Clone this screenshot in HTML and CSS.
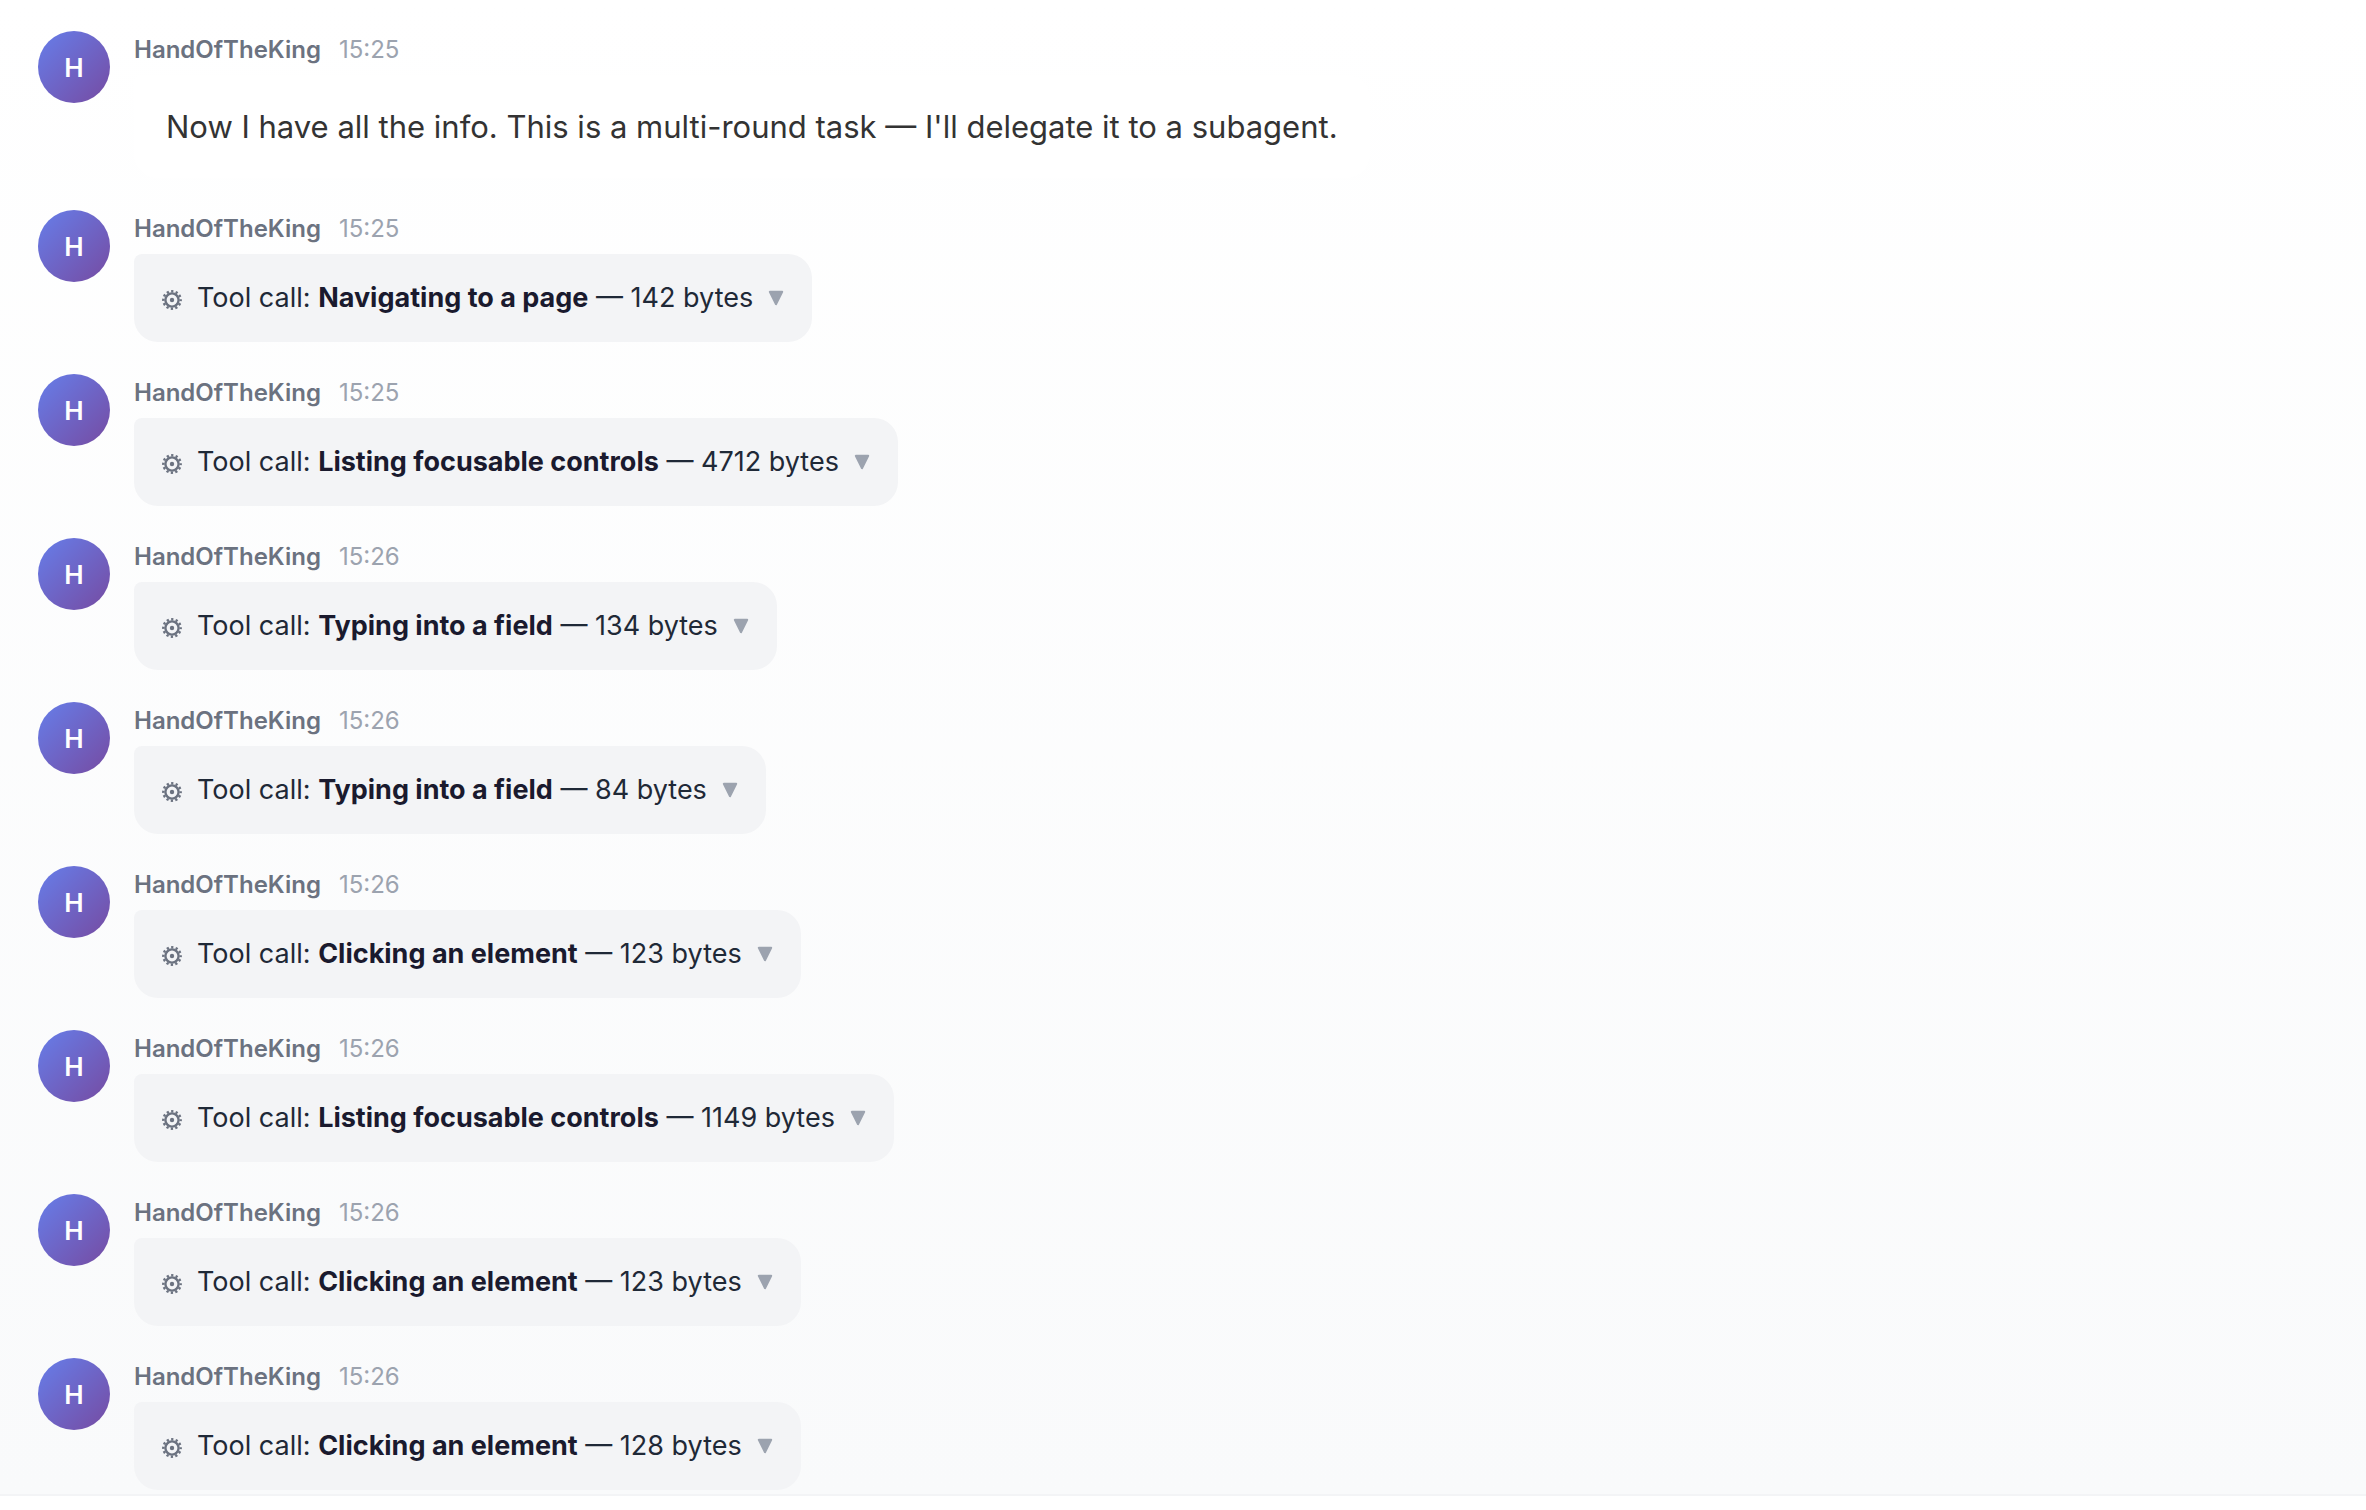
FILE: index.html
```
<!DOCTYPE html>
<html lang="en">
<head>
  <meta charset="UTF-8">
  <meta name="viewport" content="width=device-width, initial-scale=1.0">
  <title>Chat</title>
  <link rel="stylesheet" href="styles.css">
</head>
<body>
  <svg class="sprite" aria-hidden="true">
    <symbol id="gear" viewBox="0 0 20 20">
      <circle cx="10" cy="10" r="6.6" fill="none" stroke="currentColor" stroke-width="2.4"/>
      <circle cx="10" cy="10" r="8.7" fill="none" stroke="currentColor" stroke-width="2.4" stroke-dasharray="2.3 2.255" stroke-dashoffset="1.15"/>
      <circle cx="10" cy="10" r="2.2" fill="currentColor"/>
    </symbol>
    <symbol id="caret" viewBox="0 0 16 16">
      <path d="M1.8 1.8H14.2L8 14.2Z" fill="currentColor" stroke="currentColor" stroke-width="2" stroke-linejoin="round"/>
    </symbol>
  </svg>

  <main class="messages">
    <article class="message">
      <div class="avatar">H</div>
      <div class="content">
        <div class="meta"><span class="name">HandOfTheKing</span><time>15:25</time></div>
        <p class="bubble">Now I have all the info. This is a multi-round task — I'll delegate it to a subagent.</p>
      </div>
    </article>
    <article class="message">
      <div class="avatar">H</div>
      <div class="content">
        <div class="meta"><span class="name">HandOfTheKing</span><time>15:25</time></div>
        <button class="tool"><svg class="gear"><use href="#gear"/></svg><span>Tool call: <strong>Navigating to a page</strong> — 142 bytes</span><svg class="caret"><use href="#caret"/></svg></button>
      </div>
    </article>
    <article class="message">
      <div class="avatar">H</div>
      <div class="content">
        <div class="meta"><span class="name">HandOfTheKing</span><time>15:25</time></div>
        <button class="tool"><svg class="gear"><use href="#gear"/></svg><span>Tool call: <strong>Listing focusable controls</strong> — 4712 bytes</span><svg class="caret"><use href="#caret"/></svg></button>
      </div>
    </article>
    <article class="message">
      <div class="avatar">H</div>
      <div class="content">
        <div class="meta"><span class="name">HandOfTheKing</span><time>15:26</time></div>
        <button class="tool"><svg class="gear"><use href="#gear"/></svg><span>Tool call: <strong>Typing into a field</strong> — 134 bytes</span><svg class="caret"><use href="#caret"/></svg></button>
      </div>
    </article>
    <article class="message">
      <div class="avatar">H</div>
      <div class="content">
        <div class="meta"><span class="name">HandOfTheKing</span><time>15:26</time></div>
        <button class="tool"><svg class="gear"><use href="#gear"/></svg><span>Tool call: <strong>Typing into a field</strong> — 84 bytes</span><svg class="caret"><use href="#caret"/></svg></button>
      </div>
    </article>
    <article class="message">
      <div class="avatar">H</div>
      <div class="content">
        <div class="meta"><span class="name">HandOfTheKing</span><time>15:26</time></div>
        <button class="tool"><svg class="gear"><use href="#gear"/></svg><span>Tool call: <strong>Clicking an element</strong> — 123 bytes</span><svg class="caret"><use href="#caret"/></svg></button>
      </div>
    </article>
    <article class="message">
      <div class="avatar">H</div>
      <div class="content">
        <div class="meta"><span class="name">HandOfTheKing</span><time>15:26</time></div>
        <button class="tool"><svg class="gear"><use href="#gear"/></svg><span>Tool call: <strong>Listing focusable controls</strong> — 1149 bytes</span><svg class="caret"><use href="#caret"/></svg></button>
      </div>
    </article>
    <article class="message">
      <div class="avatar">H</div>
      <div class="content">
        <div class="meta"><span class="name">HandOfTheKing</span><time>15:26</time></div>
        <button class="tool"><svg class="gear"><use href="#gear"/></svg><span>Tool call: <strong>Clicking an element</strong> — 123 bytes</span><svg class="caret"><use href="#caret"/></svg></button>
      </div>
    </article>
    <article class="message">
      <div class="avatar">H</div>
      <div class="content">
        <div class="meta"><span class="name">HandOfTheKing</span><time>15:26</time></div>
        <button class="tool"><svg class="gear"><use href="#gear"/></svg><span>Tool call: <strong>Clicking an element</strong> — 128 bytes</span><svg class="caret"><use href="#caret"/></svg></button>
      </div>
    </article>
  </main>
</body>
</html>
```
FILE: styles.css
```
* {
  box-sizing: border-box;
}
body {
  margin: 0;
  background: #fff;
  font-family: Inter, "Liberation Sans", sans-serif;
}
.sprite {
  display: none;
}

.messages {
  display: flex;
  flex-direction: column;
  gap: 32px;
  padding: 31px 38px 4px;
  border-bottom: 2px solid #f3f4f6;
  background: linear-gradient(to bottom, #fff, #f9fafb);
}
.message {
  display: flex;
  align-items: flex-start;
  gap: 24px;
}
.avatar {
  display: flex;
  flex-shrink: 0;
  align-items: center;
  justify-content: center;
  width: 72px;
  height: 72px;
  border-radius: 50%;
  background: linear-gradient(135deg, #667eea, #764ba2);
  color: #fff;
  font-size: 26px;
  font-weight: 600;
}
.content {
  display: flex;
  flex-direction: column;
  align-items: flex-start;
  gap: 6px;
}
.meta {
  display: flex;
  gap: 18px;
  color: #9ca3af;
  font-size: 24px;
  line-height: 38px;
}
.name {
  color: #6b7280;
  font-weight: 600;
}

.bubble {
  margin: 0;
  padding: 28px 32px;
  border-radius: 8px 24px 24px 24px;
  background: #fff;
  color: #333;
  font-size: 31px;
  line-height: 47px;
}
.tool {
  display: flex;
  align-items: center;
  gap: 15px;
  padding: 24px 28px;
  border: none;
  border-radius: 8px 24px 24px 24px;
  background: #f3f4f6;
  color: #1f2937;
  font: inherit;
  font-size: 27px;
  line-height: 40px;
  cursor: pointer;
}
.tool strong {
  color: #1a1a2e;
  font-weight: 700;
}
.gear {
  width: 20px;
  height: 20px;
  margin-top: 3px;
  color: #6b7280;
}
.caret {
  width: 16px;
  height: 16px;
  color: #9ca3af;
}
```
